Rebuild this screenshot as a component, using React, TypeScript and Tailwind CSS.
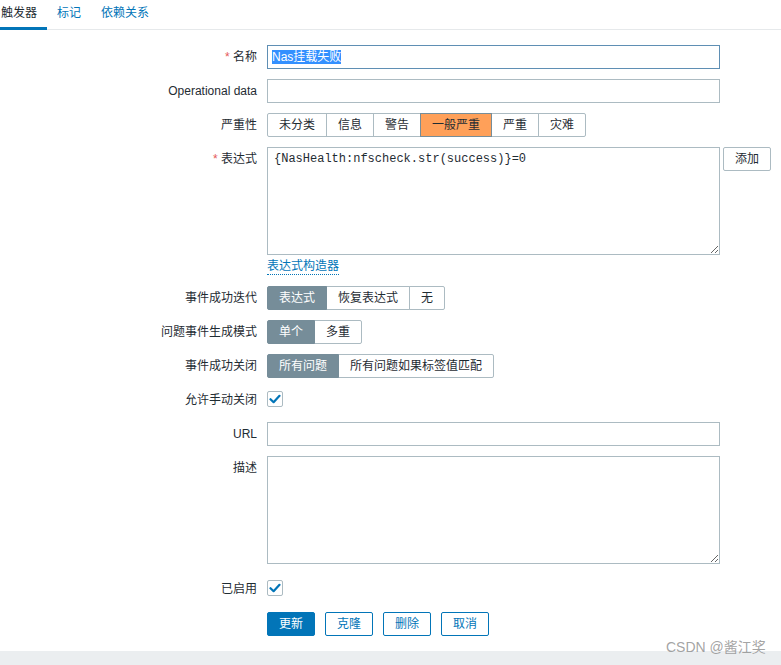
import type { ReactNode } from 'react';

const textColor = 'text-[#1f2c33]';

function Row({
  label,
  required,
  className = '',
  children,
}: {
  label?: string;
  required?: boolean;
  className?: string;
  children: ReactNode;
}) {
  return (
    <div className={`flex ${className}`}>
      <div className="w-[267px] shrink-0 pr-[10px] text-right leading-[24px] whitespace-nowrap">
        {required && <span className="text-[#e45959]">* </span>}
        {label}
      </div>
      <div className="flex items-start">{children}</div>
    </div>
  );
}

function Segmented({
  items,
  active,
  activeClass,
}: {
  items: string[];
  active: number;
  activeClass: string;
}) {
  return (
    <div className="flex h-[24px]">
      {items.map((item, i) => (
        <div
          key={item}
          className={`flex h-[24px] items-center border px-[11px] leading-[22px] whitespace-nowrap ${
            i > 0 ? '-ml-px' : ''
          } ${
            i === active
              ? activeClass
              : 'border-[#acbbc2] bg-white text-[#1f2c33]'
          } ${i === active ? 'relative z-10' : ''} ${
            i === 0 ? 'rounded-l-[2px]' : ''
          } ${i === items.length - 1 ? 'rounded-r-[2px]' : ''}`}
        >
          {item}
        </div>
      ))}
    </div>
  );
}

function Checkbox() {
  return (
    <div className="mt-[3px] flex h-[16px] w-[16px] items-center justify-center rounded-[2px] border border-[#acbbc2] bg-white">
      <svg width="12" height="10" viewBox="0 0 12 10">
        <path
          d="M1.5 5.2 L4.6 8.2 L10.5 1.8"
          fill="none"
          stroke="#0275b8"
          strokeWidth="2.2"
          strokeLinecap="round"
          strokeLinejoin="round"
        />
      </svg>
    </div>
  );
}

export default function App() {
  return (
    <div
      className={`relative h-[665px] w-[781px] overflow-hidden bg-white text-[12px] ${textColor} font-['Liberation_Sans','Noto_Sans_CJK_SC',sans-serif]`}
    >
      {/* Tabs */}
      <div className="flex h-[30px] border-b border-[#e6e9eb]">
        <div className="-ml-[9px] flex">
          <div className="relative flex h-[29px] items-center px-[10px] pb-[3px]">
            触发器
            <div className="absolute right-0 bottom-[-1px] left-0 h-[3px] bg-[#0275b8]" />
          </div>
          <div className="flex h-[29px] items-center px-[10px] pb-[3px] text-[#0275b8]">
            标记
          </div>
          <div className="flex h-[29px] items-center px-[10px] pb-[3px] text-[#0275b8]">
            依赖关系
          </div>
        </div>
      </div>

      {/* Form */}
      <div className="flex flex-col pt-[15px]">
        <Row label="名称" required>
          <div className="flex h-[24px] w-[453px] items-center border border-[#5f8fb4] bg-white px-[4px]">
            <span className="bg-[#3390ff] leading-[14px] text-white">Nas挂载失败</span>
          </div>
        </Row>

        <Row label="Operational data" className="mt-[10px]">
          <div className="h-[24px] w-[453px] border border-[#acbbc2] bg-white" />
        </Row>

        <Row label="严重性" className="mt-[10px]">
          <Segmented
            items={['未分类', '信息', '警告', '一般严重', '严重', '灾难']}
            active={3}
            activeClass="border-[#768d99] bg-[#ffa059] text-[#1f2c33]"
          />
        </Row>

        <Row label="表达式" required className="mt-[10px]">
          <textarea
            readOnly
            defaultValue="{NasHealth:nfscheck.str(success)}=0"
            className="h-[108px] w-[453px] resize-y border border-[#acbbc2] bg-white px-[6px] py-[4px] font-['Liberation_Mono',monospace] text-[12px] leading-[14px] text-[#1f2c33] outline-none"
          />
          <button className="ml-[3px] h-[24px] w-[48px] rounded-[2px] border border-[#acbbc2] bg-white text-[12px] text-[#1f2c33]">
            添加
          </button>
        </Row>

        <div className="mt-[4px] flex">
          <div className="w-[267px] shrink-0" />
          <span className="border-b border-dotted border-[#0275b8] leading-[15px] text-[#0275b8]">
            表达式构造器
          </span>
        </div>

        <Row label="事件成功迭代" className="mt-[11px]">
          <Segmented
            items={['表达式', '恢复表达式', '无']}
            active={0}
            activeClass="border-[#768d99] bg-[#768d99] text-white"
          />
        </Row>

        <Row label="问题事件生成模式" className="mt-[10px]">
          <Segmented
            items={['单个', '多重']}
            active={0}
            activeClass="border-[#768d99] bg-[#768d99] text-white"
          />
        </Row>

        <Row label="事件成功关闭" className="mt-[10px]">
          <Segmented
            items={['所有问题', '所有问题如果标签值匹配']}
            active={0}
            activeClass="border-[#768d99] bg-[#768d99] text-white"
          />
        </Row>

        <Row label="允许手动关闭" className="mt-[10px]">
          <Checkbox />
        </Row>

        <Row label="URL" className="mt-[10px]">
          <div className="h-[24px] w-[453px] border border-[#acbbc2] bg-white" />
        </Row>

        <Row label="描述" className="mt-[10px]">
          <textarea
            readOnly
            className="h-[108px] w-[453px] resize-y border border-[#acbbc2] bg-white px-[6px] py-[4px] outline-none"
          />
        </Row>

        <Row label="已启用" className="mt-[13px]">
          <Checkbox />
        </Row>

        <div className="mt-[11px] flex">
          <div className="w-[267px] shrink-0" />
          <div className="flex gap-[10px]">
            <button className="h-[24px] w-[48px] rounded-[2px] border border-[#0275b8] bg-[#0275b8] text-[12px] text-white">
              更新
            </button>
            <button className="h-[24px] w-[48px] rounded-[2px] border border-[#0275b8] bg-white text-[12px] text-[#0275b8]">
              克隆
            </button>
            <button className="h-[24px] w-[48px] rounded-[2px] border border-[#0275b8] bg-white text-[12px] text-[#0275b8]">
              删除
            </button>
            <button className="h-[24px] w-[48px] rounded-[2px] border border-[#0275b8] bg-white text-[12px] text-[#0275b8]">
              取消
            </button>
          </div>
        </div>

        <div className="mt-[15px] h-[20px] bg-[#ebeef0]" />
      </div>

      {/* watermark */}
      <div className="absolute top-[639px] left-[666px] text-[14px] leading-[16px] whitespace-nowrap text-[#8c8c8c]/80">
        CSDN @酱江奖
      </div>
    </div>
  );
}
